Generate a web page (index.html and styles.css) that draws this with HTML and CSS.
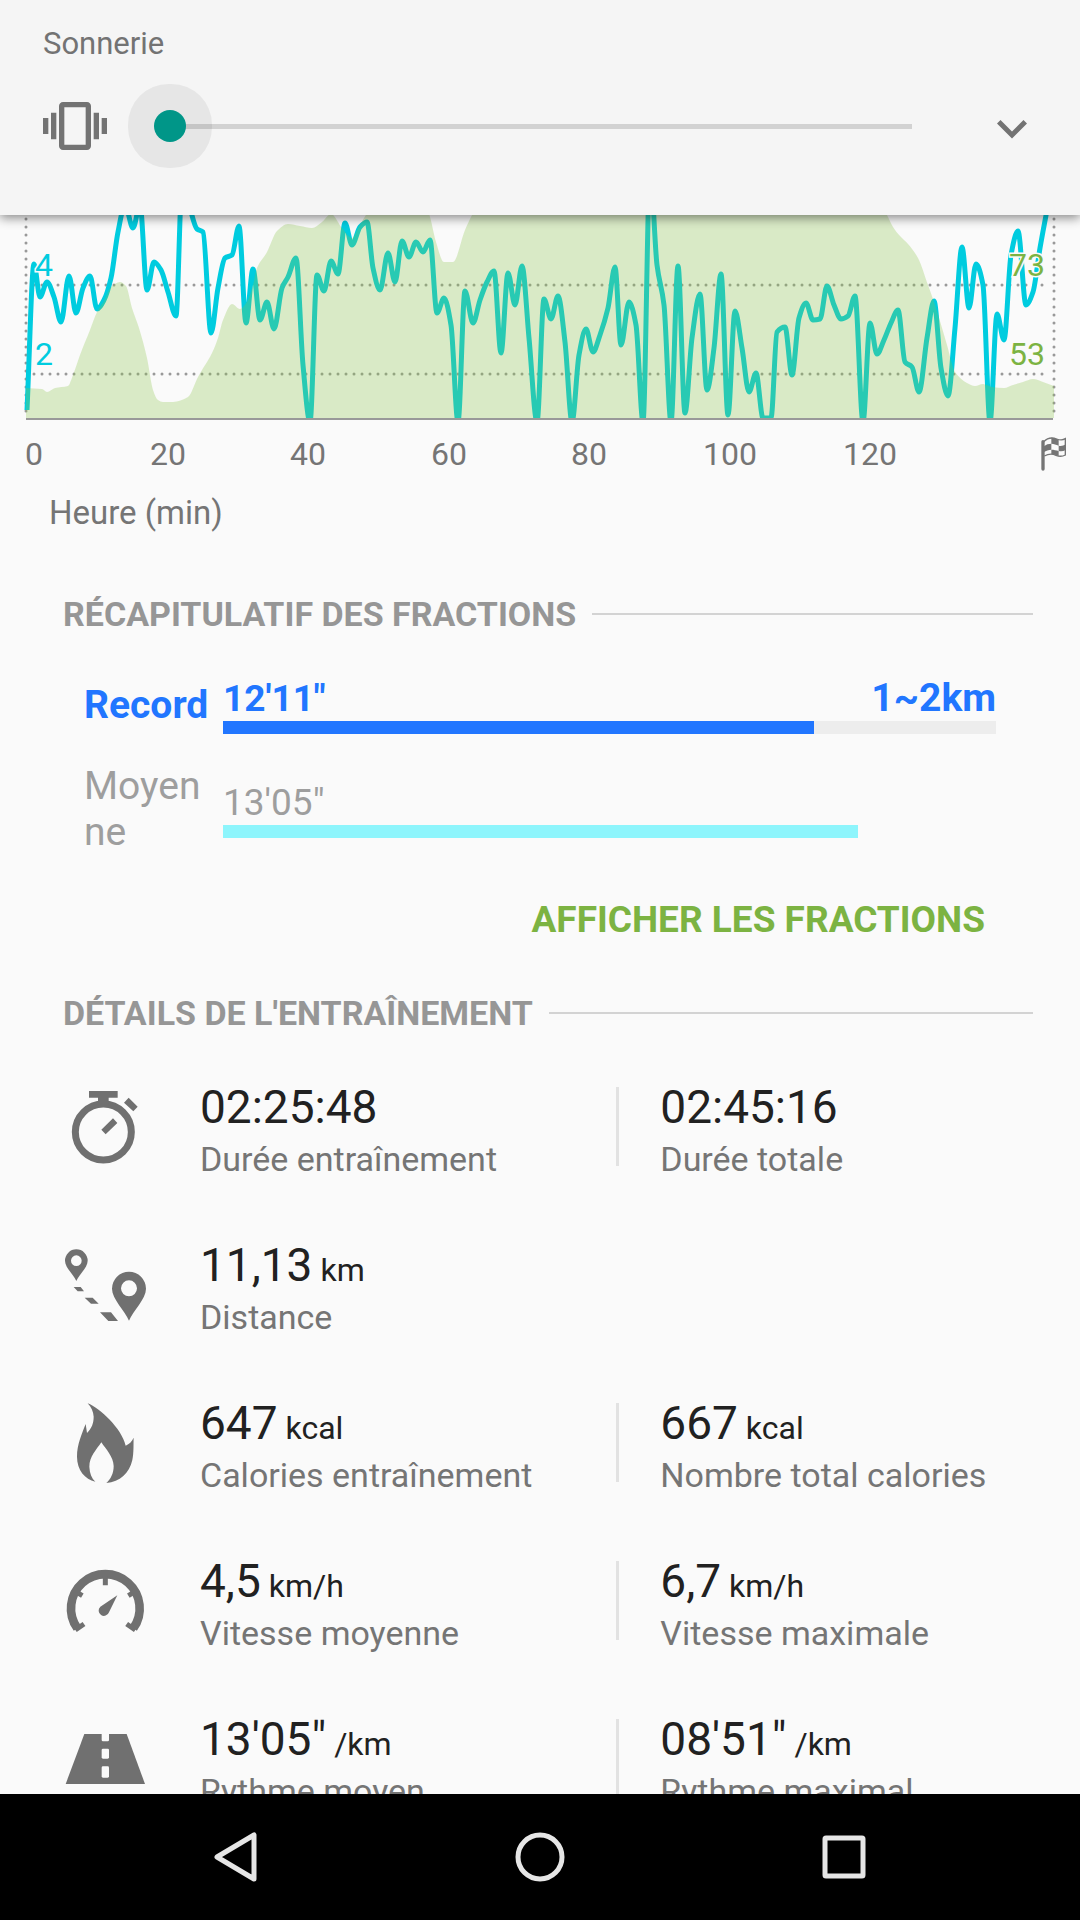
FILE: index.html
```html
<!DOCTYPE html>
<html lang="fr">
<head>
    <meta charset="UTF-8">
    <meta name="viewport" content="width=device-width, initial-scale=1.0">
    <title>Entraînement</title>
    <link rel="stylesheet" href="styles.css">
</head>
<body>
    <header class="volume">
        <label class="volume-label" for="ringVolume">Sonnerie</label>
        <div class="volume-row">
            <svg class="volume-icon" viewBox="0 0 24 24" aria-hidden="true">
                <path d="M0 15h2V9H0v6zm3 2h2V7H3v10zm19-8v6h2V9h-2zm-3 8h2V7h-2v10zM16.5 3h-9C6.67 3 6 3.67 6 4.5v15c0 .83.67 1.5 1.5 1.5h9c.83 0 1.5-.67 1.5-1.5v-15c0-.83-.67-1.5-1.5-1.5zM16 19H8V5h8v14z"/>
            </svg>
            <input class="volume-slider" id="ringVolume" type="range" min="0" max="7" value="0">
            <button class="volume-expand" type="button" aria-label="Développer">
                <svg viewBox="0 -1 24 24"><path d="M16.59 8.59L12 13.17 7.41 8.59 6 10l6 6 6-6z"/></svg>
            </button>
        </div>
    </header>

    <main class="content">
        <svg class="chart" viewBox="0 0 1080 265" role="img" aria-label="Vitesse et altitude">
            <defs>
                <clipPath id="plot"><rect x="24" y="0" width="1032" height="203"/></clipPath>
            </defs>
            <g class="grid">
                <path d="M26 4V200M1054 4V200"/>
                <path d="M34 70H1044M34 159H1044"/>
            </g>
            <g clip-path="url(#plot)">
                <path class="speed" id="speed"/>
                <path class="altitude" id="altitude"/>
            </g>
            <path class="axis" d="M26 204H1053"/>
            <g class="y-speed">
                <text x="35" y="61">4</text>
                <text x="35" y="150">2</text>
            </g>
            <g class="y-altitude">
                <text x="1045" y="61">73</text>
                <text x="1045" y="150">53</text>
            </g>
            <g class="x-labels">
                <text x="34" y="250">0</text>
                <text x="168" y="250">20</text>
                <text x="308" y="250">40</text>
                <text x="449" y="250">60</text>
                <text x="589" y="250">80</text>
                <text x="730" y="250">100</text>
                <text x="870" y="250">120</text>
            </g>
            <!-- drapeau d'arrivée -->
            <svg class="flag" x="1040" y="220" width="28" height="38" viewBox="0 0 84 114">
                <path class="pole" d="M9 20V102"/>
                <path class="cloth" d="M11 20C26 5 40 8 50 12C60 16 70 15 76 11V60C67 65 58 65 48 61C36 55 24 57 13 63"/>
                <path d="M34 8C42 8 48 11 56 14V32C48 29 42 26 34 26ZM12 34C18 28 26 26 34 26V44C26 44 18 47 12 51ZM56 32C64 34 70 32 77 28V45C70 49 64 50 56 48ZM34 44C42 44 48 46 56 48V63C48 61 42 57 34 57Z"/>
            </svg>
        </svg>
        <p class="chart-unit">Heure (min)</p>

        <h2 class="section-title">RÉCAPITULATIF DES FRACTIONS</h2>
        <div class="splits">
            <div class="split best">
                <span class="split-name">Record</span>
                <div class="split-data">
                    <div class="split-values"><span>12'11"</span><span class="split-km">1~2km</span></div>
                    <div class="bar"><div class="bar-fill" style="width: 76.5%"></div></div>
                </div>
            </div>
            <div class="split average">
                <span class="split-name">Moyenne</span>
                <div class="split-data">
                    <div class="split-values"><span>13'05"</span></div>
                    <div class="bar"><div class="bar-fill" style="width: 82.1%"></div></div>
                </div>
            </div>
        </div>
        <button class="show-splits" type="button">AFFICHER LES FRACTIONS</button>

        <h2 class="section-title">DÉTAILS DE L'ENTRAÎNEMENT</h2>
        <div class="details">
            <div class="row">
                <svg class="row-icon" viewBox="60 306 270 270" aria-hidden="true">
                    <circle cx="190" cy="456" r="84" fill="none" stroke="#707070" stroke-width="21"/>
                    <path d="M147 333h86v20h-27v20h-32v-20h-27zM266 353L293 380 280 394 252 368zM219 415L232 429 197 463 184 449z"/>
                </svg>
                <div class="stat">
                    <div class="value">02:25:48</div>
                    <div class="label">Durée entraînement</div>
                </div>
                <span class="divider"></span>
                <div class="stat">
                    <div class="value">02:45:16</div>
                    <div class="label">Durée totale</div>
                </div>
            </div>
            <div class="row">
                <svg class="row-icon" viewBox="60 780 270 270" aria-hidden="true">
                    <path fill-rule="evenodd" d="M109 903C100 883 75 862 75 842A34 34 0 0 1 143 842C143 862 118 883 109 903ZM109 826a16 16 0 1 0 0 32a16 16 0 1 0 0-32z"/>
                    <path fill-rule="evenodd" d="M267 1022C255 992 216 957 216 926A51 51 0 0 1 318 926C318 957 279 992 267 1022ZM267 901a24 24 0 1 0 0 48a24 24 0 1 0 0-48z"/>
                    <path d="M101 921h21l10 13h-19zM134 953h24l18 18h-23zM180 997h33l21 26h-29z"/>
                </svg>
                <div class="stat">
                    <div class="value">11,13<small> km</small></div>
                    <div class="label">Distance</div>
                </div>
            </div>
            <div class="row">
                <svg class="row-icon" viewBox="60 114 270 270" aria-hidden="true">
                    <path d="M143 130C180 145 245 205 257 257C268 252 275 245 281 233C280 250 282 275 277 300C268 340 240 365 199 369C212 358 221 340 221 318C220 290 198 268 184 247C170 268 148 290 148 320C149 340 155 355 166 365C135 358 111 330 111 290C111 255 125 222 137 192L141 219C155 205 161 190 161 170C160 155 154 142 143 130Z"/>
                </svg>
                <div class="stat">
                    <div class="value">647<small> kcal</small></div>
                    <div class="label">Calories entraînement</div>
                </div>
                <span class="divider"></span>
                <div class="stat">
                    <div class="value">667<small> kcal</small></div>
                    <div class="label">Nombre total calories</div>
                </div>
            </div>
            <div class="row">
                <svg class="row-icon" viewBox="60 588 270 270" aria-hidden="true">
                    <g fill="none" stroke="#707070">
                        <path stroke-width="26" d="M112 805A103 103 0 1 1 280 805"/>
                        <path stroke-width="15" d="M106 810L132 792M286 810L260 792M196 650V676M112 698L127 707M280 698L265 707"/>
                    </g>
                    <path d="M232 706L207 757A16 16 0 1 1 181 740Z"/>
                </svg>
                <div class="stat">
                    <div class="value">4,5<small> km/h</small></div>
                    <div class="label">Vitesse moyenne</div>
                </div>
                <span class="divider"></span>
                <div class="stat">
                    <div class="value">6,7<small> km/h</small></div>
                    <div class="label">Vitesse maximale</div>
                </div>
            </div>
            <div class="row">
                <svg class="row-icon" viewBox="60 1062 270 270" aria-hidden="true">
                    <path d="M133 1122H260L315 1272H77Z"/>
                    <g fill="#fafafa">
                        <rect x="185" y="1118" width="22" height="26" rx="4"/>
                        <rect x="185" y="1166" width="22" height="30" rx="4"/>
                        <rect x="185" y="1219" width="22" height="34" rx="4"/>
                    </g>
                </svg>
                <div class="stat">
                    <div class="value">13'05"<small> /km</small></div>
                    <div class="label">Rythme moyen</div>
                </div>
                <span class="divider"></span>
                <div class="stat">
                    <div class="value">08'51"<small> /km</small></div>
                    <div class="label">Rythme maximal</div>
                </div>
            </div>
        </div>
    </main>

    <nav class="navbar">
        <button type="button" aria-label="Retour">
            <svg viewBox="0 0 54 54"><path d="M45 5V49L8 27Z"/></svg>
        </button>
        <button type="button" aria-label="Accueil">
            <svg viewBox="0 0 54 54"><circle cx="27" cy="27" r="22"/></svg>
        </button>
        <button type="button" aria-label="Applications récentes">
            <svg viewBox="0 0 54 54"><rect x="8" y="8" width="38" height="38" rx="1"/></svg>
        </button>
    </nav>

    <script src="chart.js"></script>
</body>
</html>
```
FILE: styles.css
```css
* {
    box-sizing: border-box;
}
body {
    margin: 0;
    height: 100vh;
    display: flex;
    flex-direction: column;
    overflow: hidden;
    background: #fafafa;
    color: #212121;
    font-family: Roboto, "Noto Sans", sans-serif;
    font-size: 32px;
}
button {
    padding: 0;
    border: none;
    background: none;
    font-family: inherit;
    cursor: pointer;
}
svg {
    display: block;
}

/* volume panel */
.volume {
    position: relative;
    z-index: 1;
    flex: none;
    height: 215px;
    padding: 25px 38px 0 43px;
    background: #f5f5f5;
    box-shadow: 0 3px 10px rgba(0, 0, 0, 0.45);
}
.volume-label {
    display: block;
    font-size: 31px;
    line-height: 38px;
    color: #737373;
}
.volume-row {
    display: flex;
    align-items: center;
    margin-top: 21px;
}
.volume-icon {
    flex: none;
    width: 64px;
    height: 84px;
    fill: #737373;
}
.volume-slider {
    -webkit-appearance: none;
    appearance: none;
    flex: 1;
    min-width: 0;
    height: 84px;
    margin: 0 70px 0 47px;
    background: linear-gradient(#d2d2d2, #d2d2d2) 16px center / 100% 5px no-repeat;
    outline: none;
}
.volume-slider::-webkit-slider-thumb {
    -webkit-appearance: none;
    width: 32px;
    height: 32px;
    border-radius: 50%;
    background: #009688;
    box-shadow: 0 0 0 26px rgba(0, 0, 0, 0.06);
}
.volume-expand {
    flex: none;
}
.volume-expand svg {
    width: 60px;
    height: 60px;
    fill: #737373;
}

/* chart */
.content {
    flex: 1;
    min-height: 0;
    overflow: hidden;
}
.chart {
    width: 100%;
    font-size: 32px;
}
.grid {
    fill: none;
    stroke: #999;
    stroke-width: 3;
    stroke-linecap: round;
    stroke-dasharray: 0 8;
}
.speed {
    fill: none;
    stroke: #00ccdf;
    stroke-width: 5;
    stroke-linejoin: round;
}
.altitude {
    fill: #8bc34a;
    fill-opacity: 0.29;
}
.axis {
    stroke: #999;
    stroke-width: 2;
}
.y-speed,
.y-altitude {
    stroke: #fafafa;
    stroke-width: 3;
    paint-order: stroke;
}
.y-speed {
    fill: #00ccdf;
}
.y-altitude {
    fill: #7cb342;
    text-anchor: end;
}
.x-labels {
    fill: #757575;
    text-anchor: middle;
}
.flag {
    fill: #757575;
}
.flag .pole,
.flag .cloth {
    fill: none;
    stroke: #757575;
    stroke-width: 4;
}
.flag .pole {
    stroke-width: 10;
    stroke-linecap: round;
}
.chart-unit {
    margin: 14px 0 0;
    padding-left: 49px;
    font-size: 33px;
    line-height: 38px;
    color: #757575;
}

/* splits */
.section-title {
    display: flex;
    align-items: center;
    gap: 16px;
    margin: 62px 47px 0 63px;
    color: #969696;
    font-size: 34px;
    font-weight: 700;
    line-height: 40px;
}
.section-title::after {
    content: "";
    flex: 1;
    height: 2px;
    background: #d3d3d3;
}
.splits {
    display: flex;
    flex-direction: column;
    gap: 29px;
    padding: 42px 84px 0;
}
.split {
    display: flex;
    align-items: center;
    gap: 11px;
    font-size: 37px;
}
.split-name {
    width: 128px;
    font-size: 39px;
    line-height: 46px;
    word-break: break-all;
}
.split-data {
    flex: 1;
}
.split-values {
    display: flex;
    justify-content: space-between;
    line-height: 45px;
}
.split-km {
    font-size: 39px;
}
.bar {
    height: 13px;
}
.bar-fill {
    height: 100%;
}
.best {
    color: #2176ff;
    font-weight: 700;
}
.best .bar {
    background: #ededed;
}
.best .bar-fill {
    background: #2176ff;
}
.average {
    color: #9e9e9e;
}
.average .bar-fill {
    background: #8df5fc;
}
.show-splits {
    display: block;
    margin: 43px 95px 0 auto;
    color: #7cb342;
    font-size: 37px;
    font-weight: 700;
    line-height: 44px;
}
.show-splits + .section-title {
    margin-top: 51px;
}

/* workout details */
.details {
    display: flex;
    flex-direction: column;
    gap: 54px;
    padding: 49px 45px 0 60px;
}
.row {
    display: flex;
    height: 104px;
}
.row-icon {
    flex: none;
    width: 90px;
    height: 90px;
    margin-right: 50px;
    fill: #707070;
}
.stat {
    flex: 1 1 0;
    white-space: nowrap;
}
.divider {
    width: 3px;
    height: 79px;
    margin: 5px 41px 0 0;
    background: #e2e2e2;
}
.divider + .stat {
    flex-grow: 0.9;
}
.value {
    font-size: 46px;
    line-height: 50px;
}
.value small {
    font-size: 32px;
    line-height: 32px;
}
.label {
    color: #757575;
    font-size: 34px;
    line-height: 54px;
}

/* system navigation */
.navbar {
    flex: none;
    display: flex;
    height: 126px;
    padding: 0 84px;
    background: #000;
}
.navbar button {
    flex: 1;
}
.navbar svg {
    width: 54px;
    height: 54px;
    margin: 0 auto;
    fill: none;
    stroke: #e6e6e6;
    stroke-width: 5;
    stroke-linejoin: round;
}
```
FILE: chart.js
```javascript
const speed = [
    [27,195],[34,49],[40,82],[47,67],[54,82],[61,107],[69,61],[76,98],[83,73],[90,61],
    [97,94],[104,85],[111,63],[118,17],[125,-10],[133,13],[140,-10],[147,75],[154,47],[161,55],
    [168,77],[176,101],[182,-30],[189,-10],[197,14],[203,17],[211,118],[218,73],[225,43],[232,40],
    [239,11],[246,108],[253,54],[260,105],[267,87],[274,114],[282,73],[288,62],[296,43],[303,150],
    [310,207],[317,60],[324,76],[331,46],[338,59],[345,8],[352,30],[360,12],[367,7],[373,53],
    [380,75],[388,38],[395,67],[402,26],[409,42],[416,27],[423,37],[430,25],[437,98],[444,83],
    [451,110],[458,207],[465,76],[473,108],[480,85],[487,67],[494,56],[501,138],[508,58],[515,90],
    [522,51],[529,123],[537,207],[544,84],[551,104],[558,81],[565,127],[572,207],[579,140],[586,114],
    [593,137],[600,120],[608,93],[615,52],[621,130],[629,87],[636,110],[643,207],[650,-45],[657,50],
    [664,90],[671,207],[678,51],[685,198],[692,123],[700,79],[707,175],[714,133],[721,59],[728,200],
    [735,96],[742,133],[749,177],[756,158],[763,203],[771,203],[777,117],[785,112],[792,160],[799,103],
    [806,88],[813,105],[820,104],[827,71],[834,90],[841,104],[848,101],[855,81],[863,207],[870,108],
    [877,139],[884,125],[891,108],[898,95],[905,147],[912,152],[919,177],[927,123],[934,86],[941,153],
    [948,181],[955,113],[962,32],[969,93],[976,49],[983,70],[990,207],[997,99],[1004,125],[1011,40],
    [1018,16],[1026,90],[1033,77],[1040,33],[1047,-5]
];

const altitude = [
    [26,173],[42,174],[47,177],[55,173],[68,171],[73,160],[80,140],[90,115],[97,97],[104,86],
    [111,72],[120,67],[126,71],[132,93],[139,113],[147,143],[153,175],[158,185],[163,187],[173,187],
    [188,182],[198,162],[212,138],[218,123],[223,105],[232,89],[240,94],[248,85],[253,70],[257,53],
    [267,37],[277,16],[288,9],[300,11],[312,13],[322,7],[331,-1],[342,13],[352,23],[358,13],
    [367,-2],[372,-12],[425,-12],[430,2],[436,27],[444,47],[453,47],[465,15],[472,0],[478,-12],
    [880,-12],[887,0],[893,12],[900,21],[908,29],[918,43],[928,70],[935,90],[947,130],[955,157],
    [967,168],[975,171],[983,169],[992,172],[1004,173],[1013,170],[1023,167],[1033,164],[1043,167],[1054,171]
];

// smooth curve through the points, flat at every peak and dip
function curve(points) {
    const last = points.length - 1;
    const step = i => (points[i + 1][1] - points[i][1]) / (points[i + 1][0] - points[i][0]);
    const slope = points.map((p, i) => {
        if (i === 0) return step(0);
        if (i === last) return step(last - 1);
        const a = step(i - 1);
        const b = step(i);
        return a * b <= 0 ? 0 : 2 * a * b / (a + b);
    });

    let d = 'M' + points[0].join(' ');
    for (let i = 0; i < last; i++) {
        const [x0, y0] = points[i];
        const [x1, y1] = points[i + 1];
        const h = (x1 - x0) / 3;
        d += `C${x0 + h} ${y0 + h * slope[i]} ${x1 - h} ${y1 - h * slope[i + 1]} ${x1} ${y1}`;
    }
    return d;
}

document.getElementById('speed').setAttribute('d', curve(speed));
document.getElementById('altitude').setAttribute('d', curve(altitude) + 'V203H26Z');
```
